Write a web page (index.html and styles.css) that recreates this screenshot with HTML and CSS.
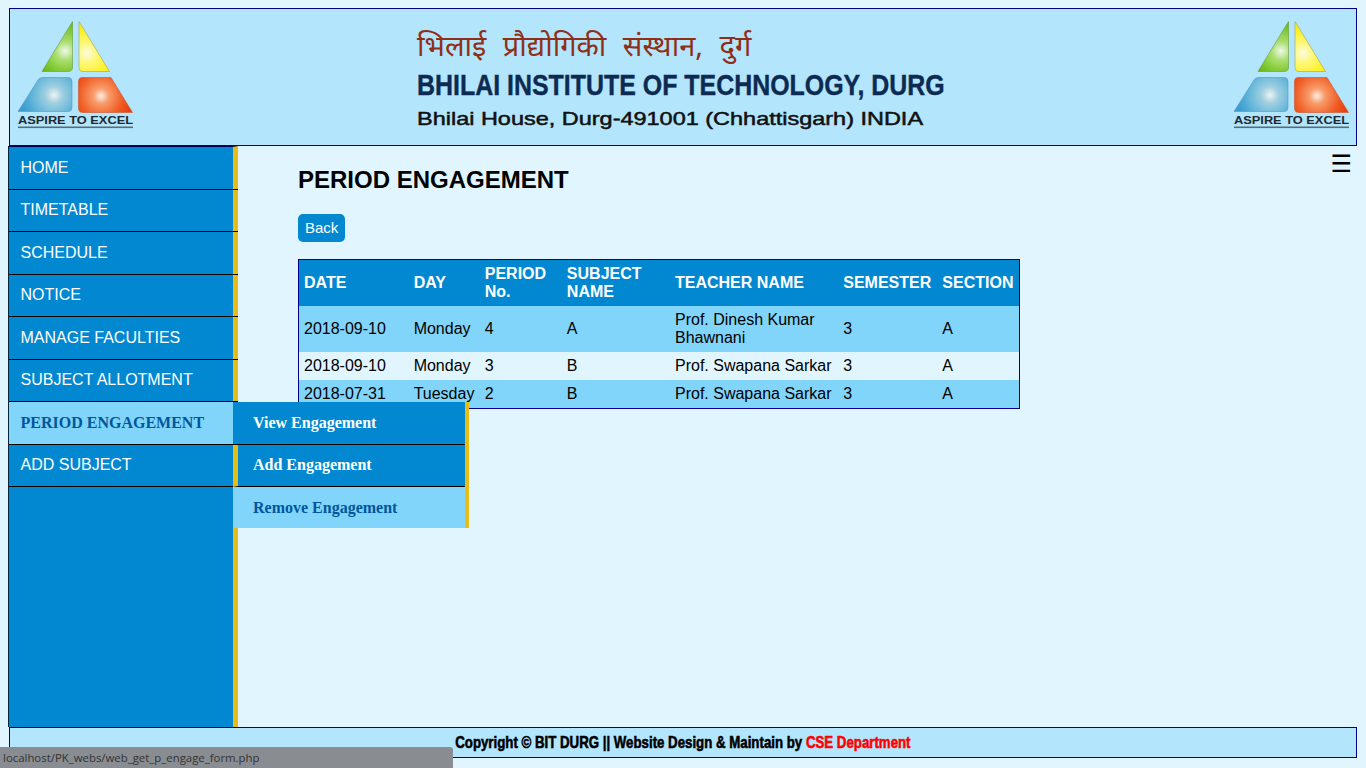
FILE: index.html
```html
<!DOCTYPE html>
<html>
<head>
    <title>Period Engagement</title>
    <link rel="stylesheet" href="styles.css">
</head>
<body>
    <svg class="defs" width="0" height="0">
        <defs>
            <radialGradient id="gGreen" gradientUnits="userSpaceOnUse" cx="48" cy="30" r="32">
                <stop offset="0" stop-color="#f0f8ea"/>
                <stop offset="0.3" stop-color="#a9de6e"/>
                <stop offset="0.75" stop-color="#76c322"/>
                <stop offset="1" stop-color="#62ad18"/>
            </radialGradient>
            <radialGradient id="gYellow" gradientUnits="userSpaceOnUse" cx="70" cy="32" r="32">
                <stop offset="0" stop-color="#fbfbe0"/>
                <stop offset="0.3" stop-color="#fdf87c"/>
                <stop offset="0.75" stop-color="#fdf020"/>
                <stop offset="1" stop-color="#f7e20a"/>
            </radialGradient>
            <radialGradient id="gBlue" gradientUnits="userSpaceOnUse" cx="37" cy="74" r="34">
                <stop offset="0" stop-color="#eef3f3"/>
                <stop offset="0.25" stop-color="#9fcfe0"/>
                <stop offset="0.7" stop-color="#58b1d8"/>
                <stop offset="1" stop-color="#3a9cd0"/>
            </radialGradient>
            <radialGradient id="gRed" gradientUnits="userSpaceOnUse" cx="84" cy="75" r="32">
                <stop offset="0" stop-color="#fbeee4"/>
                <stop offset="0.25" stop-color="#f89a68"/>
                <stop offset="0.7" stop-color="#f05a22"/>
                <stop offset="1" stop-color="#e8400e"/>
            </radialGradient>
            <symbol id="logo" viewBox="0 0 118 110">
                <path d="M55.5 0.5 L55.5 46 Q55.5 50.5 51 50.5 L25 50.5 Z" fill="url(#gGreen)" stroke="#6d9a3a" stroke-width="0.6"/>
                <path d="M62 0.5 L92.5 50.5 L66 50.5 Q62 50.5 62 46 Z" fill="url(#gYellow)" stroke="#a9a23a" stroke-width="0.6"/>
                <path d="M25 56.5 L51 56.5 Q55 56.5 55 60.5 L55 86 Q55 90.5 51 90.5 L1 90.5 L21 59 Q22.5 56.5 25 56.5 Z" fill="url(#gBlue)" stroke="#5b97b5" stroke-width="0.6"/>
                <path d="M65 56.5 L94 56.5 L115.5 91.5 L66 91.5 Q61.5 91.5 61.5 87 L61.5 60.5 Q61.5 56.5 65 56.5 Z" fill="url(#gRed)" stroke="#c9542a" stroke-width="0.6"/>
                <text class="logo-text" x="58.5" y="103" text-anchor="middle" textLength="115" lengthAdjust="spacingAndGlyphs">ASPIRE TO EXCEL</text>
                <rect x="1" y="105.5" width="115" height="1.6" fill="#5f6b73"/>
            </symbol>
        </defs>
    </svg>

    <div class="page">
        <header class="banner">
            <svg class="logo" width="118" height="110"><use href="#logo"/></svg>
            <div class="banner-text">
                <div class="hindi-name">भिलाई प्रौद्योगिकी संस्थान, दुर्ग</div>
                <div class="english-name">BHILAI INSTITUTE OF TECHNOLOGY, DURG</div>
                <div class="address">Bhilai House, Durg-491001 (Chhattisgarh) INDIA</div>
            </div>
            <svg class="logo" width="118" height="110"><use href="#logo"/></svg>
        </header>

        <div class="middle">
            <nav class="sidebar">
                <a class="side-item" href="#">HOME</a>
                <a class="side-item" href="#">TIMETABLE</a>
                <a class="side-item" href="#">SCHEDULE</a>
                <a class="side-item" href="#">NOTICE</a>
                <a class="side-item" href="#">MANAGE FACULTIES</a>
                <a class="side-item" href="#">SUBJECT ALLOTMENT</a>
                <a class="side-item active" href="#">PERIOD ENGAGEMENT</a>
                <a class="side-item" href="#">ADD SUBJECT</a>
                <div class="submenu">
                    <a class="sub-item first" href="#">View Engagement</a>
                    <a class="sub-item" href="#">Add Engagement</a>
                    <a class="sub-item hover" href="#">Remove Engagement</a>
                </div>
            </nav>

            <main class="content">
                <div class="menu-toggle">☰</div>
                <h1 class="title">PERIOD ENGAGEMENT</h1>
                <a class="back-btn" href="#">Back</a>
                <table class="engage-table">
                    <colgroup>
                        <col class="col-date">
                        <col class="col-day">
                        <col class="col-period">
                        <col class="col-subject">
                        <col class="col-teacher">
                        <col class="col-sem">
                        <col class="col-sec">
                    </colgroup>
                    <thead>
                        <tr>
                            <th>DATE</th>
                            <th>DAY</th>
                            <th>PERIOD No.</th>
                            <th>SUBJECT NAME</th>
                            <th>TEACHER NAME</th>
                            <th>SEMESTER</th>
                            <th>SECTION</th>
                        </tr>
                    </thead>
                    <tbody>
                        <tr class="shade">
                            <td>2018-09-10</td>
                            <td>Monday</td>
                            <td>4</td>
                            <td>A</td>
                            <td>Prof. Dinesh Kumar Bhawnani</td>
                            <td>3</td>
                            <td>A</td>
                        </tr>
                        <tr>
                            <td>2018-09-10</td>
                            <td>Monday</td>
                            <td>3</td>
                            <td>B</td>
                            <td>Prof. Swapana Sarkar</td>
                            <td>3</td>
                            <td>A</td>
                        </tr>
                        <tr class="shade">
                            <td>2018-07-31</td>
                            <td>Tuesday</td>
                            <td>2</td>
                            <td>B</td>
                            <td>Prof. Swapana Sarkar</td>
                            <td>3</td>
                            <td>A</td>
                        </tr>
                    </tbody>
                </table>
            </main>
        </div>

        <footer class="footer">
            <span class="footer-text">Copyright © BIT DURG || Website Design &amp; Maintain by <span class="dept">CSE Department</span></span>
        </footer>
    </div>

    <div class="status-bar">localhost/PK_webs/web_get_p_engage_form.php</div>
</body>
</html>
```

FILE: styles.css
```css
* {
    box-sizing: border-box;
}

body {
    margin: 0;
    background-color: #e1f5fe;
    font-family: "Liberation Sans", Arial, sans-serif;
    font-size: 16px;
    color: #000;
}

a {
    text-decoration: none;
}

.defs {
    position: absolute;
}

.page {
    height: 768px;
    padding: 8px 0 10px;
    display: flex;
    flex-direction: column;
    overflow: hidden;
}

/* banner */
.banner {
    height: 138px;
    margin: 0 9px;
    border: 1px solid #00008b;
    background-color: #b3e5fc;
    display: flex;
    align-items: flex-start;
    padding: 12px 5px 0 7px;
}

.logo {
    flex: none;
    display: block;
}

.logo-text {
    font-family: "Liberation Sans", Arial, sans-serif;
    font-weight: bold;
    font-size: 11.5px;
    fill: #1d2a33;
}

.banner-text {
    flex: 1;
    padding: 5px 0 0 282px;
}

.hindi-name {
    height: 42px;
    font-family: "Noto Sans", "DejaVu Sans", sans-serif;
    font-size: 29px;
    line-height: 38px;
    word-spacing: 9px;
    color: #8f2f17;
    white-space: nowrap;
}

.english-name {
    height: 34px;
    font-weight: bold;
    font-size: 30px;
    line-height: 34px;
    color: #0d2b52;
    white-space: nowrap;
    transform: scaleX(0.831);
    transform-origin: left center;
    -webkit-text-stroke: 0.4px #0d2b52;
}

.address {
    margin-top: 4px;
    font-size: 19px;
    line-height: 26px;
    color: #111;
    white-space: nowrap;
    transform: scaleX(1.235);
    transform-origin: left center;
    -webkit-text-stroke: 0.5px #111;
}

/* sidebar */
.middle {
    flex: 1;
    display: flex;
    min-height: 0;
}

.sidebar {
    position: relative;
    z-index: 2;
    flex: none;
    width: 230px;
    margin-left: 8px;
    border-left: 1px solid #06263a;
    border-top: 1px solid #00004d;
    border-right: 5px solid #e6bd17;
    background-color: #0288d1;
}

.side-item {
    display: flex;
    align-items: center;
    height: 42.5px;
    margin-right: -5px;
    padding-left: 11.5px;
    border-bottom: 1px solid #000;
    color: #fff;
}

.side-item.active {
    background-color: #81d4fa;
    color: #01579b;
    font-family: "Liberation Serif", serif;
    font-weight: bold;
}

.submenu {
    position: absolute;
    left: 224px;
    top: 255px;
    width: 236px;
    border-right: 4px solid #e6bd17;
}

.sub-item {
    display: flex;
    align-items: center;
    height: 42.5px;
    padding-left: 20px;
    border-bottom: 1px solid #000;
    background-color: #0288d1;
    color: #fff;
    font-family: "Liberation Serif", serif;
    font-weight: bold;
}

.sub-item.first + .sub-item {
    border-left: 5px solid #e6bd17;
    padding-left: 15px;
}

.sub-item.hover {
    border-bottom: 0;
    height: 41px;
    background-color: #81d4fa;
    color: #01579b;
}

/* content */
.content {
    position: relative;
    flex: 1;
    padding: 20px 0 0 60px;
}

.menu-toggle {
    position: absolute;
    top: 3px;
    right: 14px;
    font-family: "DejaVu Sans", sans-serif;
    font-size: 24px;
    line-height: 30px;
}

.title {
    margin: 0 0 20px;
    font-size: 24px;
    line-height: 28px;
    font-weight: bold;
}

.back-btn {
    display: inline-block;
    height: 28px;
    padding: 0 7px;
    border-radius: 5px;
    background-color: #0288d1;
    color: #fff;
    font-size: 15px;
    line-height: 28px;
}

.engage-table {
    margin-top: 17px;
    width: 722px;
    table-layout: fixed;
    border-collapse: collapse;
    border: 1px solid #00008b;
    line-height: 18px;
}

.col-date { width: 110px; }
.col-day { width: 71px; }
.col-period { width: 82px; }
.col-subject { width: 108px; }
.col-teacher { width: 168px; }
.col-sem { width: 99px; }
.col-sec { width: 82px; }

.engage-table th {
    padding: 5px;
    background-color: #0288d1;
    color: #fff;
    text-align: left;
    font-weight: bold;
}

.engage-table td {
    padding: 5px;
}

.engage-table .shade td {
    background-color: #81d4fa;
}

/* footer */
.footer {
    height: 31px;
    margin: 0 9px;
    padding-top: 1px;
    border: 1px solid #00008b;
    background-color: #b3e5fc;
    display: flex;
    align-items: center;
    justify-content: center;
}

.footer-text {
    font-weight: bold;
    font-size: 17px;
    white-space: pre;
    transform: scaleX(0.78);
    -webkit-text-stroke: 0.6px #000;
}

.dept {
    color: #f00;
    -webkit-text-stroke: 0.6px #f00;
}

.status-bar {
    position: fixed;
    left: 0;
    bottom: 0;
    width: 453px;
    height: 21px;
    padding-left: 3px;
    border-top-right-radius: 3px;
    background-color: #898d92;
    color: #333;
    font-family: "Open Sans", sans-serif;
    font-size: 11.4px;
    line-height: 22px;
}
```
